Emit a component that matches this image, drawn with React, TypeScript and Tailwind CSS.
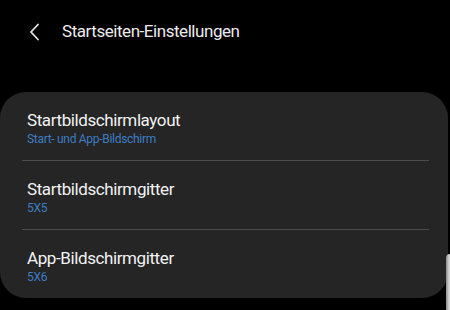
export default function App() {
  const items = [
    { title: 'Startbildschirmlayout', sub: 'Start- und App-Bildschirm' },
    { title: 'Startbildschirmgitter', sub: '5X5' },
    { title: 'App-Bildschirmgitter', sub: '5X6' },
  ]

  return (
    <div className="relative w-[450px] h-[310px] overflow-hidden bg-black font-['Roboto',sans-serif]">
      {/* header */}
      <div className="flex items-center h-[64px] pl-[28px]">
        <svg width="14" height="18" viewBox="0 0 14 18" className="text-[#e6e6e6]">
          <path d="M10 1.5 L3 9 L10 16.5" fill="none" stroke="currentColor" strokeWidth="1.8" strokeLinecap="round" strokeLinejoin="round" />
        </svg>
        <h1 className="ml-[20px] text-[17px] text-[#ececec] tracking-[-0.45px]">Startseiten-Einstellungen</h1>
      </div>

      {/* card */}
      <div className="mt-[28px] w-[448px] rounded-[26px] bg-[#252525] pl-[22px] pr-[19px]">
        {items.map((it, i) => (
          <div key={it.title}>
            {i > 0 && <div className="h-px bg-[#4d4d4d]" />}
            <div className="flex flex-col justify-center h-[68px] pl-[5px] pt-[4px]">
              <div className="text-[17px] leading-[22px] tracking-[-0.4px] text-[#f2f2f2]">{it.title}</div>
              <div className="text-[12px] leading-[16px] tracking-[-0.3px] text-[#3d7dc4]">{it.sub}</div>
            </div>
          </div>
        ))}
      </div>

      {/* scrollbar peeking in */}
      <div className="absolute left-[446px] top-[254px] w-[6px] h-[60px] rounded-l-[4px] bg-gradient-to-r from-[#8a8a8a] via-[#d4d4d4] to-[#e4e4e4]" />
    </div>
  )
}
